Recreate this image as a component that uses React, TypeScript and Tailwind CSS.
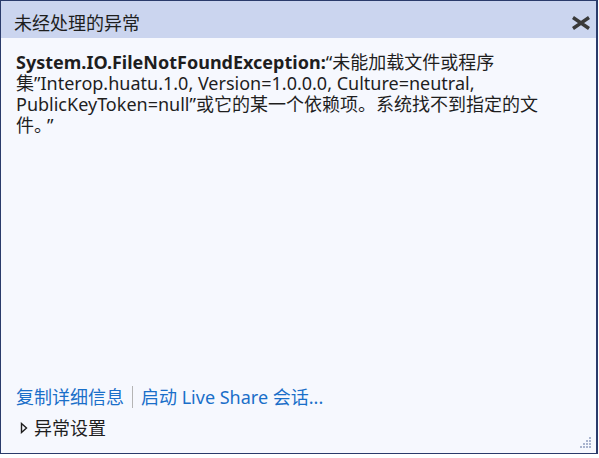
const FONT = "font-['Segoe_UI','Noto_Sans','Noto_Sans_CJK_SC',sans-serif]"

function CloseIcon() {
  return (
    <svg width="20" height="14" viewBox="0 0 20 14" className="text-[#3a3a3a]">
      <path d="M2 1.5 L18 12.5 M18 1.5 L2 12.5" stroke="currentColor" strokeWidth="3.4" />
    </svg>
  )
}

function Grip() {
  // dotted resize grip in the corner
  const dots = [
    [9, 0], [9, 3], [6, 3], [9, 6], [6, 6], [3, 6], [9, 9], [6, 9], [3, 9], [0, 9],
  ]
  return (
    <svg width="12" height="12" viewBox="0 0 12 12" className="absolute right-[4px] bottom-[4px]">
      {dots.map(([x, y]) => (
        <rect key={`${x}-${y}`} x={x} y={y} width="2" height="2" fill="#a9b4cf" />
      ))}
    </svg>
  )
}

export default function App() {
  return (
    <div className={`${FONT} w-[599px] h-[458px] bg-white`}>
      <div className="relative w-[598px] h-[454px] border border-[#2a3b6b] border-r-2 bg-[#f6f8fe] flex flex-col">
        <div className="h-[37px] bg-[#cbd5ef] flex items-center justify-between pl-[13px] pr-[5px] pt-[7px]">
          <span className="text-[18px] text-[#1e1e1e] leading-none">未经处理的异常</span>
          <CloseIcon />
        </div>
        <div className="flex-1 px-[15px] pt-[14px] text-[18px] leading-[21px] text-[#1e1e1e] whitespace-nowrap">
          <div>
            <span className="font-bold">System.IO.FileNotFoundException:</span>“未能加载文件或程序
          </div>
          <div>集”Interop.huatu.1.0, Version=1.0.0.0, Culture=neutral,</div>
          <div>PublicKeyToken=null”或它的某一个依赖项。系统找不到指定的文</div>
          <div>
            件。<span className="ml-[4px]">”</span>
          </div>
        </div>
        <div className="px-[15px] pb-[14px] text-[18px]">
          <div className="flex items-center text-[#1a6fc9] h-[22px]">
            <span>复制详细信息</span>
            <span className="mx-[8px] w-px h-[22px] bg-[#b5b5b5]" />
            <span>启动 Live Share 会话...</span>
          </div>
          <div className="flex items-center mt-[9px] text-[#1e1e1e] h-[22px]">
            <svg width="10" height="12" viewBox="0 0 10 12" className="ml-[3px] mr-[5px]">
              <path d="M2.5 1.5 L7.5 6 L2.5 10.5 Z" fill="none" stroke="#1e1e1e" strokeWidth="1.4" />
            </svg>
            <span>异常设置</span>
          </div>
        </div>
        <Grip />
      </div>
    </div>
  )
}
